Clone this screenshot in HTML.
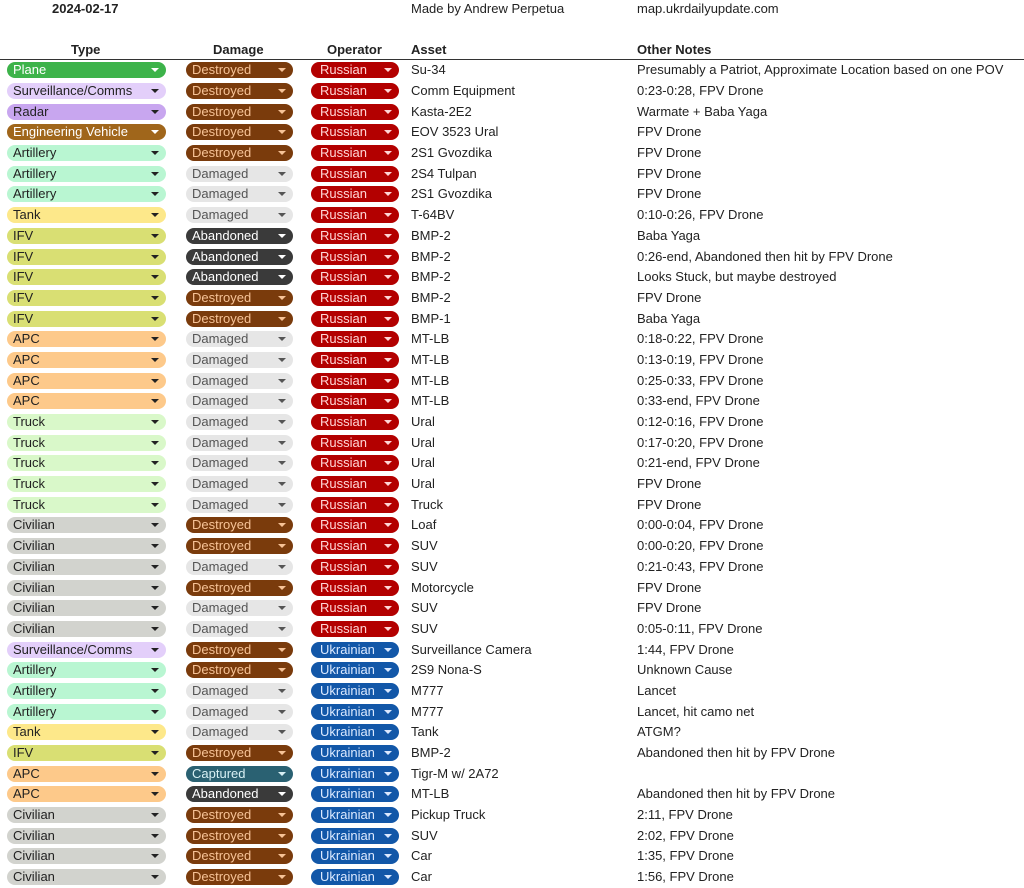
<!DOCTYPE html>
<html><head><meta charset="utf-8"><style>
*{margin:0;padding:0;box-sizing:border-box}
body{width:1024px;height:888px;background:#fff;font-family:"Liberation Sans",sans-serif;font-size:13px;color:#222;position:relative;overflow:hidden}
.t{position:absolute;white-space:nowrap}
.b{font-weight:bold}
#rows{position:absolute;top:60px;left:0;width:1024px}
.r{height:20.7px;position:relative}
.r span{position:absolute;white-space:nowrap;top:2.35px;height:16px;line-height:16px;border-radius:8px;padding-left:6px;font-size:13px}
.r span:after{content:"";position:absolute;right:7px;top:6px;width:0;height:0;border-left:4px solid transparent;border-right:4px solid transparent;border-top:4px solid currentColor}
.ty{left:7px;width:159px;color:#222}
.dm{left:186px;width:107px;padding-left:6px}
.op{left:311px;width:88px;padding-left:9px!important}
.r i,.r em{position:absolute;font-style:normal;top:2.35px;line-height:16px;white-space:nowrap}
.r i{left:411px}.r em{left:637px}
.pl{background:#3db34a;color:#fff!important}
.su{background:#e3cffa}.ra{background:#c8a6ef}
.en{background:#a0661b;color:#fff!important}
.ar{background:#b9f6d2}.tk{background:#fde88a}.if{background:#d9df73}
.ap{background:#fdc98a}.tr{background:#d9f8c9}.ci{background:#d2d3ce}
.de{background:#7a3b0c;color:#f7c397}
.da{background:#e6e6e6;color:#555}
.ab{background:#3a3a3a;color:#fff}
.ca{background:#2a6172;color:#d8f0f4}
.ru{background:#b30000;color:#ffd6d6}
.uk{background:#1257a8;color:#dbe9ff}
</style></head><body>
<div class="t b" style="left:52px;top:1px">2024-02-17</div>
<div class="t" style="left:411px;top:1px">Made by Andrew Perpetua</div>
<div class="t" style="left:637px;top:1px">map.ukrdailyupdate.com</div>
<div class="t b" style="left:71px;top:42px">Type</div>
<div class="t b" style="left:213px;top:42px">Damage</div>
<div class="t b" style="left:327px;top:42px">Operator</div>
<div class="t b" style="left:411px;top:42px">Asset</div>
<div class="t b" style="left:637px;top:42px">Other Notes</div>
<div style="position:absolute;left:0;top:59px;width:1024px;height:1px;background:#333"></div>
<div id="rows">
<div class="r"><span class="ty pl">Plane</span><span class="dm de">Destroyed</span><span class="op ru">Russian</span><i>Su-34</i><em>Presumably a Patriot, Approximate Location based on one POV</em></div>
<div class="r"><span class="ty su">Surveillance/Comms</span><span class="dm de">Destroyed</span><span class="op ru">Russian</span><i>Comm Equipment</i><em>0:23-0:28, FPV Drone</em></div>
<div class="r"><span class="ty ra">Radar</span><span class="dm de">Destroyed</span><span class="op ru">Russian</span><i>Kasta-2E2</i><em>Warmate + Baba Yaga</em></div>
<div class="r"><span class="ty en">Engineering Vehicle</span><span class="dm de">Destroyed</span><span class="op ru">Russian</span><i>EOV 3523 Ural</i><em>FPV Drone</em></div>
<div class="r"><span class="ty ar">Artillery</span><span class="dm de">Destroyed</span><span class="op ru">Russian</span><i>2S1 Gvozdika</i><em>FPV Drone</em></div>
<div class="r"><span class="ty ar">Artillery</span><span class="dm da">Damaged</span><span class="op ru">Russian</span><i>2S4 Tulpan</i><em>FPV Drone</em></div>
<div class="r"><span class="ty ar">Artillery</span><span class="dm da">Damaged</span><span class="op ru">Russian</span><i>2S1 Gvozdika</i><em>FPV Drone</em></div>
<div class="r"><span class="ty tk">Tank</span><span class="dm da">Damaged</span><span class="op ru">Russian</span><i>T-64BV</i><em>0:10-0:26, FPV Drone</em></div>
<div class="r"><span class="ty if">IFV</span><span class="dm ab">Abandoned</span><span class="op ru">Russian</span><i>BMP-2</i><em>Baba Yaga</em></div>
<div class="r"><span class="ty if">IFV</span><span class="dm ab">Abandoned</span><span class="op ru">Russian</span><i>BMP-2</i><em>0:26-end, Abandoned then hit by FPV Drone</em></div>
<div class="r"><span class="ty if">IFV</span><span class="dm ab">Abandoned</span><span class="op ru">Russian</span><i>BMP-2</i><em>Looks Stuck, but maybe destroyed</em></div>
<div class="r"><span class="ty if">IFV</span><span class="dm de">Destroyed</span><span class="op ru">Russian</span><i>BMP-2</i><em>FPV Drone</em></div>
<div class="r"><span class="ty if">IFV</span><span class="dm de">Destroyed</span><span class="op ru">Russian</span><i>BMP-1</i><em>Baba Yaga</em></div>
<div class="r"><span class="ty ap">APC</span><span class="dm da">Damaged</span><span class="op ru">Russian</span><i>MT-LB</i><em>0:18-0:22, FPV Drone</em></div>
<div class="r"><span class="ty ap">APC</span><span class="dm da">Damaged</span><span class="op ru">Russian</span><i>MT-LB</i><em>0:13-0:19, FPV Drone</em></div>
<div class="r"><span class="ty ap">APC</span><span class="dm da">Damaged</span><span class="op ru">Russian</span><i>MT-LB</i><em>0:25-0:33, FPV Drone</em></div>
<div class="r"><span class="ty ap">APC</span><span class="dm da">Damaged</span><span class="op ru">Russian</span><i>MT-LB</i><em>0:33-end, FPV Drone</em></div>
<div class="r"><span class="ty tr">Truck</span><span class="dm da">Damaged</span><span class="op ru">Russian</span><i>Ural</i><em>0:12-0:16, FPV Drone</em></div>
<div class="r"><span class="ty tr">Truck</span><span class="dm da">Damaged</span><span class="op ru">Russian</span><i>Ural</i><em>0:17-0:20, FPV Drone</em></div>
<div class="r"><span class="ty tr">Truck</span><span class="dm da">Damaged</span><span class="op ru">Russian</span><i>Ural</i><em>0:21-end, FPV Drone</em></div>
<div class="r"><span class="ty tr">Truck</span><span class="dm da">Damaged</span><span class="op ru">Russian</span><i>Ural</i><em>FPV Drone</em></div>
<div class="r"><span class="ty tr">Truck</span><span class="dm da">Damaged</span><span class="op ru">Russian</span><i>Truck</i><em>FPV Drone</em></div>
<div class="r"><span class="ty ci">Civilian</span><span class="dm de">Destroyed</span><span class="op ru">Russian</span><i>Loaf</i><em>0:00-0:04, FPV Drone</em></div>
<div class="r"><span class="ty ci">Civilian</span><span class="dm de">Destroyed</span><span class="op ru">Russian</span><i>SUV</i><em>0:00-0:20, FPV Drone</em></div>
<div class="r"><span class="ty ci">Civilian</span><span class="dm da">Damaged</span><span class="op ru">Russian</span><i>SUV</i><em>0:21-0:43, FPV Drone</em></div>
<div class="r"><span class="ty ci">Civilian</span><span class="dm de">Destroyed</span><span class="op ru">Russian</span><i>Motorcycle</i><em>FPV Drone</em></div>
<div class="r"><span class="ty ci">Civilian</span><span class="dm da">Damaged</span><span class="op ru">Russian</span><i>SUV</i><em>FPV Drone</em></div>
<div class="r"><span class="ty ci">Civilian</span><span class="dm da">Damaged</span><span class="op ru">Russian</span><i>SUV</i><em>0:05-0:11, FPV Drone</em></div>
<div class="r"><span class="ty su">Surveillance/Comms</span><span class="dm de">Destroyed</span><span class="op uk">Ukrainian</span><i>Surveillance Camera</i><em>1:44, FPV Drone</em></div>
<div class="r"><span class="ty ar">Artillery</span><span class="dm de">Destroyed</span><span class="op uk">Ukrainian</span><i>2S9 Nona-S</i><em>Unknown Cause</em></div>
<div class="r"><span class="ty ar">Artillery</span><span class="dm da">Damaged</span><span class="op uk">Ukrainian</span><i>M777</i><em>Lancet</em></div>
<div class="r"><span class="ty ar">Artillery</span><span class="dm da">Damaged</span><span class="op uk">Ukrainian</span><i>M777</i><em>Lancet, hit camo net</em></div>
<div class="r"><span class="ty tk">Tank</span><span class="dm da">Damaged</span><span class="op uk">Ukrainian</span><i>Tank</i><em>ATGM?</em></div>
<div class="r"><span class="ty if">IFV</span><span class="dm de">Destroyed</span><span class="op uk">Ukrainian</span><i>BMP-2</i><em>Abandoned then hit by FPV Drone</em></div>
<div class="r"><span class="ty ap">APC</span><span class="dm ca">Captured</span><span class="op uk">Ukrainian</span><i>Tigr-M w/ 2A72</i><em></em></div>
<div class="r"><span class="ty ap">APC</span><span class="dm ab">Abandoned</span><span class="op uk">Ukrainian</span><i>MT-LB</i><em>Abandoned then hit by FPV Drone</em></div>
<div class="r"><span class="ty ci">Civilian</span><span class="dm de">Destroyed</span><span class="op uk">Ukrainian</span><i>Pickup Truck</i><em>2:11, FPV Drone</em></div>
<div class="r"><span class="ty ci">Civilian</span><span class="dm de">Destroyed</span><span class="op uk">Ukrainian</span><i>SUV</i><em>2:02, FPV Drone</em></div>
<div class="r"><span class="ty ci">Civilian</span><span class="dm de">Destroyed</span><span class="op uk">Ukrainian</span><i>Car</i><em>1:35, FPV Drone</em></div>
<div class="r"><span class="ty ci">Civilian</span><span class="dm de">Destroyed</span><span class="op uk">Ukrainian</span><i>Car</i><em>1:56, FPV Drone</em></div>
</div>
</body></html>
